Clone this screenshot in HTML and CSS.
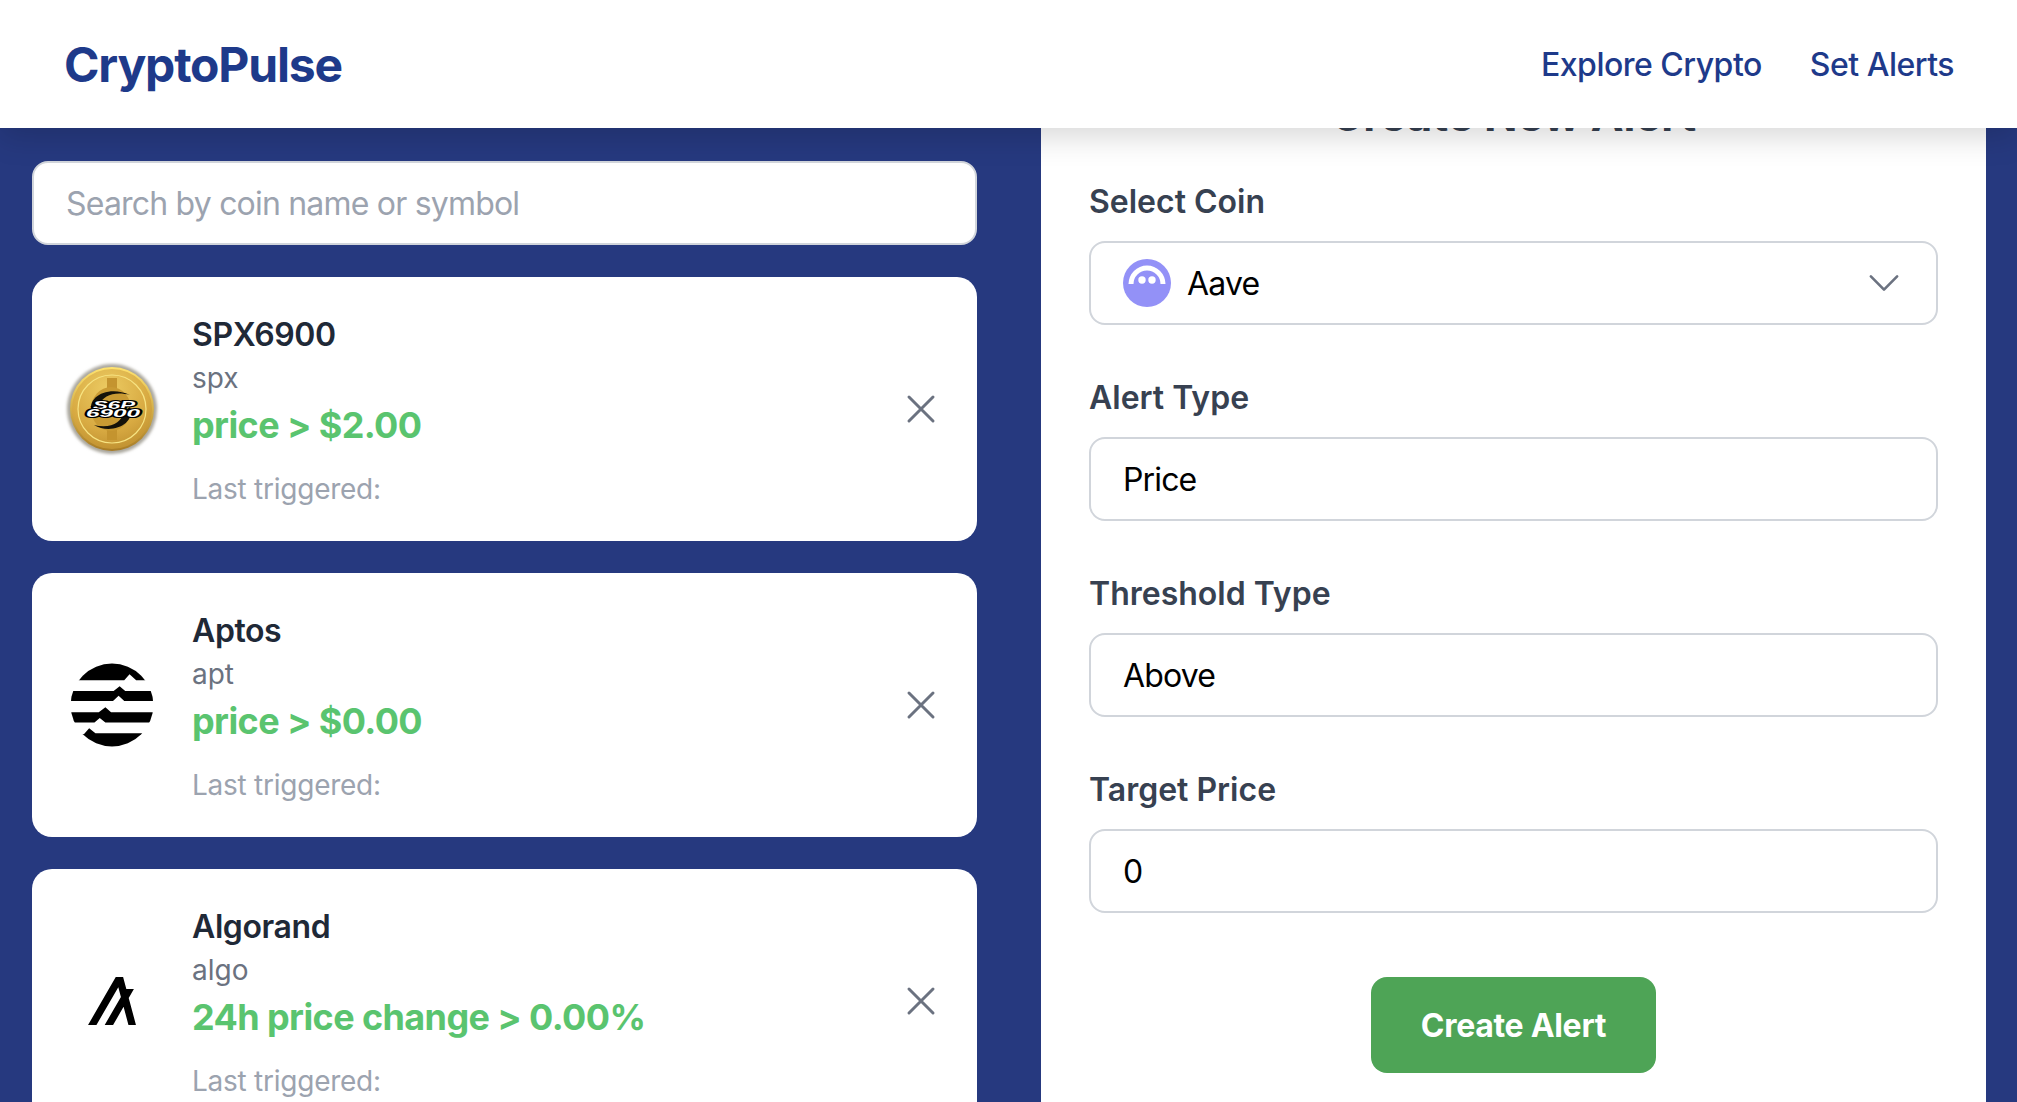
FILE: index.html
```html
<!DOCTYPE html>
<html lang="en">
<head>
<meta charset="utf-8">
<title>CryptoPulse</title>
<link rel="stylesheet" href="styles.css">
</head>
<body>
<header class="topbar">
  <a class="logo">CryptoPulse</a>
  <nav class="nav"><a>Explore Crypto</a><a>Set Alerts</a></nav>
</header>
<main class="layout">
  <section class="alerts">
    <input class="search" placeholder="Search by coin name or symbol">
    <article class="card">
      <svg class="coin" viewBox="0 0 96 96">
        <defs>
          <radialGradient id="gold" cx="45%" cy="25%" r="85%"><stop offset="0" stop-color="#eccb62"/><stop offset=".6" stop-color="#d8aa42"/><stop offset="1" stop-color="#b98a2c"/></radialGradient>
          <linearGradient id="rim" x1="0" y1="0" x2="0" y2="1"><stop offset="0" stop-color="#ffe36f"/><stop offset="1" stop-color="#a87c26"/></linearGradient>
          <filter id="soft"><feGaussianBlur stdDeviation="1.8"/></filter>
        </defs>
        <circle cx="48" cy="48" r="45" fill="#aaa79e" filter="url(#soft)"/>
        <circle cx="48" cy="48" r="42" fill="url(#rim)"/>
        <circle cx="48" cy="48" r="40" fill="url(#gold)"/>
        <circle cx="48" cy="48" r="34" fill="none" stroke="#f7e483" stroke-width="1.200"/>
        <path d="M43 17h10v12H43zM43 67h10v12H43z" fill="#c4942f"/>
        <ellipse cx="47" cy="48" rx="20" ry="22" fill="#c99a33"/>
        <path d="M28 52C22 36 44 24 66 34 52 30 38 34 36 44zM66 46c6 18-20 28-36 18 16 4 28-2 30-14z" fill="#15120a"/>
        <text class="coin-text" x="50" y="47.500" textLength="42" lengthAdjust="spacingAndGlyphs">S6P</text>
        <text class="coin-text" x="49" y="56" textLength="54" lengthAdjust="spacingAndGlyphs">6900</text>
      </svg>
      <div class="info">
        <h3 class="name">SPX6900</h3>
        <p class="symbol">spx</p>
        <p class="rule">price &gt; $2.00</p>
        <p class="last">Last triggered:</p>
      </div>
      <svg class="close" viewBox="0 0 24 24"><path d="M6 18 18 6M6 6l12 12"/></svg>
    </article>
    <article class="card">
      <svg class="coin" viewBox="40 40 290 250">
        <defs><clipPath id="apt"><circle cx="185" cy="165" r="125"/></clipPath></defs>
        <g clip-path="url(#apt)">
          <path d="M50 30H320V90H258L238 72 222 90H50z"/>
          <path d="M50 123H190L208 108 225 123H320V153H222L205 137 188 153H50z"/>
          <path d="M50 187H145L165 172 182 187H320V218H165L148 204 132 218H50z"/>
          <path d="M50 253H100L116 235 135 250H320V300H50z"/>
        </g>
      </svg>
      <div class="info">
        <h3 class="name">Aptos</h3>
        <p class="symbol">apt</p>
        <p class="rule">price &gt; $0.00</p>
        <p class="last">Last triggered:</p>
      </div>
      <svg class="close" viewBox="0 0 24 24"><path d="M6 18 18 6M6 6l12 12"/></svg>
    </article>
    <article class="card">
      <svg class="coin" viewBox="-12 -12 48 48"><path d="M23.98 23.99h-3.75l-2.44-9.07-5.25 9.07H8.35l8.1-14.04-1.3-4.88L4.22 24H.02L13.88 0h3.67l1.61 5.96h3.79l-2.59 4.5 3.62 13.53z"/></svg>
      <div class="info">
        <h3 class="name">Algorand</h3>
        <p class="symbol">algo</p>
        <p class="rule">24h price change &gt; 0.00%</p>
        <p class="last">Last triggered:</p>
      </div>
      <svg class="close" viewBox="0 0 24 24"><path d="M6 18 18 6M6 6l12 12"/></svg>
    </article>
  </section>
  <section class="panel">
    <h2 class="panel-title">Create New Alert</h2>
    <div class="field">
      <label class="label">Select Coin</label>
      <div class="control control-select">
        <svg class="aave" viewBox="0 0 48 48">
          <circle cx="24" cy="24" r="24" fill="#9391f7"/>
          <path d="M5.5 25a18.500 18.500 0 0 1 37 0h-5a13.500 13.500 0 0 0-27 0z" fill="#fff"/>
          <circle cx="19" cy="21" r="3.700" fill="#fff"/>
          <circle cx="29" cy="21" r="3.700" fill="#fff"/>
        </svg>
        <span class="control-text">Aave</span>
        <svg class="chevron" viewBox="0 0 24 24"><path d="M19.500 8.250l-7.500 7.500-7.500-7.500"/></svg>
      </div>
    </div>
    <div class="field">
      <label class="label">Alert Type</label>
      <div class="control">Price</div>
    </div>
    <div class="field">
      <label class="label">Threshold Type</label>
      <div class="control">Above</div>
    </div>
    <div class="field">
      <label class="label">Target Price</label>
      <input class="control" value="0">
    </div>
    <div class="actions"><button class="submit">Create Alert</button></div>
  </section>
</main>
</body>
</html>
```

FILE: styles.css
```css
* { box-sizing: border-box; }
html, body { margin: 0; height: 100%; overflow: hidden; }
body { background: #26397f; font-family: Inter, "Liberation Sans", sans-serif; color: #1f2937; }
h2, h3, p { margin: 0; }

.topbar {
  position: relative;
  z-index: 2;
  height: 128px;
  background: #fff;
  display: flex;
  align-items: center;
  justify-content: space-between;
  padding: 0 63px 0 64px;
  box-shadow: 0 8px 30px rgba(0, 0, 0, .16);
}
.logo { font-size: 48px; font-weight: 700; color: #1e3a8a; letter-spacing: -1.2px; }
.nav { display: flex; gap: 48px; font-size: 32px; font-weight: 500; color: #1e3a8a; letter-spacing: -.5px; }

.layout {
  display: grid;
  grid-template-columns: 945px 945px;
  gap: 64px;
  padding: 33px 32px 32px;
  align-items: start;
}

.alerts { display: flex; flex-direction: column; gap: 32px; }
.search {
  height: 84px;
  border: 2px solid #d1d5db;
  border-radius: 16px;
  padding: 0 32px;
  font: 400 32px Inter, "Liberation Sans", sans-serif;
  letter-spacing: -.8px;
  background: #fff;
  outline: none;
}
.search::placeholder { color: #9ca3af; opacity: 1; }

.card {
  height: 264px;
  background: #fff;
  border-radius: 20px;
  padding: 32px;
  display: flex;
  align-items: center;
  gap: 32px;
}
.coin { width: 96px; height: 96px; flex: none; }
.coin-text {
  font: italic 700 10px "Liberation Sans", sans-serif;
  fill: #fff;
  stroke: #000;
  stroke-width: 2.2px;
  paint-order: stroke;
  text-anchor: middle;
}
.info { flex: 1; min-width: 0; }
.name { height: 48px; font-size: 32px; line-height: 51px; font-weight: 600; color: #1f2937; letter-spacing: -.4px; }
.symbol { height: 40px; font-size: 28px; line-height: 42px; color: #6b7280; }
.rule { height: 56px; font-size: 36px; line-height: 57px; font-weight: 700; color: #5ac46f; letter-spacing: -.6px; }
.last { height: 40px; margin-top: 16px; font-size: 28px; line-height: 41px; color: #9ca3af; letter-spacing: -.25px; }
.close { width: 48px; height: 48px; flex: none; }
.close path { fill: none; stroke: #6b7280; stroke-width: 1.5; stroke-linecap: round; }

.panel {
  margin-top: -122px;
  background: #fff;
  padding: 48px;
  min-height: 1200px;
}
.panel-title {
  font-size: 44px;
  line-height: 56px;
  font-weight: 700;
  letter-spacing: -.1px;
  color: #374151;
  text-align: center;
  margin-bottom: 35px;
}
.field { margin-bottom: 49px; }
.label { display: block; font-size: 32px; line-height: 48px; font-weight: 600; color: #374151; margin-bottom: 15px; }
.control {
  display: flex;
  align-items: center;
  width: 100%;
  height: 84px;
  border: 2px solid #d1d5db;
  border-radius: 16px;
  padding: 0 32px;
  font: 400 32px Inter, "Liberation Sans", sans-serif;
  letter-spacing: -.85px;
  color: #000;
  background: #fff;
  outline: none;
}
.control-select { gap: 16px; }
.aave { width: 48px; height: 48px; flex: none; }
.control-text { flex: 1; }
.chevron { width: 42px; height: 42px; flex: none; margin-right: -1px; }
.chevron path { fill: none; stroke: #6b7280; stroke-width: 1.5; stroke-linecap: round; stroke-linejoin: round; }

.actions { display: flex; justify-content: center; margin-top: 64px; }
.submit {
  width: 285px;
  height: 96px;
  border: 0;
  border-radius: 16px;
  background: #4ea456;
  color: #fff;
  font: 700 32px Inter, "Liberation Sans", sans-serif;
  letter-spacing: -.3px;
}
```
